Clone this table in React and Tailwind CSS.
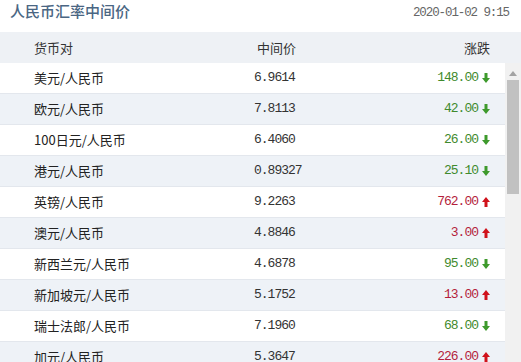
import React from "react";

const rows = [
  ["美元/人民币", "6.9614", "148.00", "down"],
  ["欧元/人民币", "7.8113", "42.00", "down"],
  ["100日元/人民币", "6.4060", "26.00", "down"],
  ["港元/人民币", "0.89327", "25.10", "down"],
  ["英镑/人民币", "9.2263", "762.00", "up"],
  ["澳元/人民币", "4.8846", "3.00", "up"],
  ["新西兰元/人民币", "4.6878", "95.00", "down"],
  ["新加坡元/人民币", "5.1752", "13.00", "up"],
  ["瑞士法郎/人民币", "7.1960", "68.00", "down"],
  ["加元/人民币", "5.3647", "226.00", "up"],
];

function Arrow({ dir }) {
  if (dir === "up") {
    return (
      <svg width="8" height="10" viewBox="0 0 8 10" className="ml-[4px]">
        <polygon points="4,0 8,5 5.5,5 5.5,10 2.5,10 2.5,5 0,5" fill="#d0121b" />
      </svg>
    );
  }
  return (
    <svg width="8" height="10" viewBox="0 0 8 10" className="ml-[4px]">
      <polygon points="2.5,0 5.5,0 5.5,5 8,5 4,10 0,5 2.5,5" fill="#3e9a2c" />
    </svg>
  );
}

const cjk = { fontFamily: '"Noto Sans CJK SC", "Noto Sans", sans-serif' };
const mono = { fontFamily: '"Liberation Mono", "DejaVu Sans Mono", monospace' };

export default function App() {
  return (
    <div className="w-[521px] h-[362px] overflow-hidden bg-white" style={cjk}>
      <div className="h-[32px] flex items-start justify-between pl-[10px] pr-[12px]">
        <div className="text-[15px] leading-[20px] pt-[1px] text-[#4a6683] font-medium">人民币汇率中间价</div>
        <div className="text-[12.5px] leading-[14px] pt-[6px] text-[#666] tracking-[-1.1px]" style={mono}>2020-01-02 9:15</div>
      </div>
      <div className="h-[31px] flex items-center bg-[#eef1f5] text-[13px] text-[#333]">
        <div className="w-[257px] pl-[34px]">货币对</div>
        <div className="w-[150px]">中间价</div>
        <div className="w-[83px] text-right">涨跌</div>
      </div>
      <div className="flex">
        <div className="w-[505px]">
          {rows.map((r, i) => (
            <div
              key={i}
              className={`h-[31px] flex items-center border-b border-[#e3e7ed] ${i % 2 === 0 ? "bg-white" : "bg-[#eef2f7]"}`}
            >
              <div className="w-[254px] pl-[34px] text-[13px] text-[#222]">{r[0]}</div>
              <div className="w-[150px] text-[13px] tracking-[-1px] text-[#333]" style={mono}>{r[1]}</div>
              <div className="w-[86px] flex items-center justify-end">
                <span
                  className={`text-[13px] tracking-[-1px] ${r[3] === "up" ? "text-[#b41e3c]" : "text-[#3f8a2d]"}`}
                  style={mono}
                >
                  {r[2]}
                </span>
                <Arrow dir={r[3]} />
              </div>
            </div>
          ))}
        </div>
        <div className="w-[16px] h-[300px] bg-[#f1f1f1] flex flex-col items-center">
          <svg width="8" height="5" viewBox="0 0 8 5" className="mt-[8px]">
            <polygon points="4,0 8,5 0,5" fill="#a3a3a3" />
          </svg>
          <div className="mt-[4px] w-[12px] h-[114px] bg-[#c1c1c1]" />
        </div>
      </div>
    </div>
  );
}
